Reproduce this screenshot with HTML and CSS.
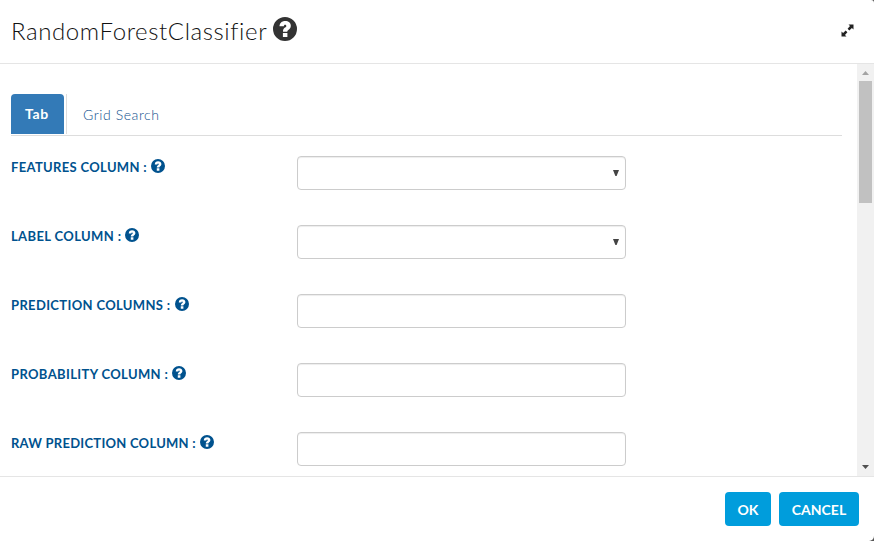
FILE: index.html
```html
<!DOCTYPE html>
<html lang="en">
<head>
<meta charset="utf-8">
<title>RandomForestClassifier</title>
<link rel="stylesheet" href="styles.css">
</head>
<body>
<svg class="defs" width="0" height="0" aria-hidden="true">
  <symbol id="help" viewBox="0 0 24 24">
    <path fill="currentColor" fill-rule="evenodd" d="M12 0a12 12 0 1 0 0 24a12 12 0 1 0 0-24ZM6.500 9.300C6.500 6 8.800 3.900 12.200 3.900C15.500 3.900 17.800 5.800 17.800 8.700C17.800 10.800 16.700 12 15.300 13C14.500 13.600 14.300 13.900 14.300 14.700H10C10 12.700 10.500 11.700 12 10.600C12.900 10 13.300 9.600 13.300 8.900C13.300 8.200 12.800 7.800 12.100 7.800C11.300 7.800 10.900 8.300 10.900 9.300ZM9.900 16H14.400V20H9.900Z"/>
  </symbol>
</svg>
<div class="dialog">
  <header class="head">
    <h1 class="title">RandomForestClassifier</h1>
    <svg class="help-lg"><use href="#help"/></svg>
    <svg class="expand" viewBox="0 0 13 13"><path fill="currentColor" d="M7.500 0.500H12.500V5.500L10.900 4L8.300 6.400L6.600 4.700L9 2.100ZM5.500 12.500H0.500V7.500L2.100 9L4.700 6.600L6.400 8.300L4 10.900Z"/></svg>
  </header>
  <div class="body">
    <main class="content">
      <nav class="tabs"><a class="tab active"><span>Tab</span></a><a class="tab other"><span>Grid Search</span></a></nav>
      <form class="form">
        <div class="row"><label class="l1">FEATURES COLUMN :</label><svg class="help"><use href="#help"/></svg><div class="field"><i class="arrow"></i></div></div>
        <div class="row"><label class="l2">LABEL COLUMN :</label><svg class="help"><use href="#help"/></svg><div class="field"><i class="arrow"></i></div></div>
        <div class="row"><label class="l3">PREDICTION COLUMNS :</label><svg class="help"><use href="#help"/></svg><div class="field"></div></div>
        <div class="row"><label class="l4">PROBABILITY COLUMN :</label><svg class="help"><use href="#help"/></svg><div class="field"></div></div>
        <div class="row"><label class="l5">RAW PREDICTION COLUMN :</label><svg class="help"><use href="#help"/></svg><div class="field"></div></div>
      </form>
    </main>
    <div class="scrollbar"><i class="up"></i><i class="thumb"></i><i class="down"></i></div>
  </div>
  <footer class="foot"><button class="btn ok">OK</button><button class="btn cancel">CANCEL</button></footer>
</div>
</body>
</html>
```
FILE: styles.css
```css
* { box-sizing: border-box; }
body { margin: 0; background: #555; font-family: Lato, sans-serif; overflow: hidden; }
.defs { position: absolute; }
.dialog { width: 874px; height: 541px; background: #fff; border-radius: 0 3px 5px 0; display: flex; flex-direction: column; overflow: hidden; }
.head { height: 64px; flex: none; border-bottom: 1px solid #e5e5e5; display: flex; align-items: flex-start; padding-left: 11px; color: #333; }
.title { margin: 15px 0 0; width: 262px; font-size: 24px; line-height: 32px; font-weight: 300; letter-spacing: 0.6px; white-space: nowrap; color: #111; }
.help-lg { width: 24px; height: 24px; margin-top: 17px; }
.expand { width: 13px; height: 13px; margin: 24px 20px 0 auto; color: #222; }
.body { height: 412px; flex: none; display: flex; }
.content { width: 857px; padding: 30px 15px 0 11px; overflow: hidden; }
.tabs { height: 42px; border-bottom: 1px solid #ddd; display: flex; font-size: 14px; line-height: 40px; color: #337ab7; }
.tab { height: 40px; }
.active { width: 53px; margin-right: 2px; padding-left: 14px; border-radius: 4px 4px 0 0; background: #337ab7; color: #fff; font-weight: 700; letter-spacing: .6px; }
.other { border-left: 1px solid #ddd; padding: 1px 0 0 16px; font-weight: 300; letter-spacing: .58px; color: #10508e; }
.form { padding-top: 20px; }
.row { display: flex; height: 69px; color: #00528e; }
.row label { font-size: 13px; line-height: 22px; font-weight: 700; white-space: nowrap; }
.l1 { letter-spacing: .33px; }
.l2 { letter-spacing: .37px; }
.l3 { letter-spacing: .35px; }
.l4 { letter-spacing: .36px; }
.l5 { letter-spacing: .26px; }
.help { width: 14px; height: 14px; margin: 3px 0 0 4px; flex: none; }
.field { width: 329px; height: 34px; margin-left: auto; margin-right: 216px; flex: none; border: 1px solid #ccc; border-radius: 4px; box-shadow: inset 0 1px 1px rgba(0,0,0,.075); display: flex; justify-content: flex-end; padding: 13px 6px 0 0; }
.arrow { width: 6px; height: 6px; background: #444; clip-path: polygon(0 0, 100% 0, 60% 100%, 40% 100%); }
.scrollbar { width: 17px; background: #f1f1f1; display: flex; flex-direction: column; align-items: center; }
.up { width: 7px; height: 4px; margin-top: 7px; background: #a3a3a3; clip-path: polygon(50% 0, 100% 100%, 0 100%); }
.thumb { width: 13px; height: 122px; margin-top: 6px; background: #c1c1c1; }
.down { width: 7px; height: 4px; margin: auto 0 7px; background: #505050; clip-path: polygon(0 0, 100% 0, 50% 100%); }
.foot { flex: 1; border-top: 1px solid #e5e5e5; display: flex; justify-content: flex-end; gap: 8px; padding: 15px 15px 0 0; }
.btn { height: 34px; border: 0; border-radius: 4px; background: #009ddc; color: #fff; font: 700 14px/34px Lato, sans-serif; padding: 1px 0 0; }
.ok { width: 46px; }
.cancel { width: 80px; }
```
